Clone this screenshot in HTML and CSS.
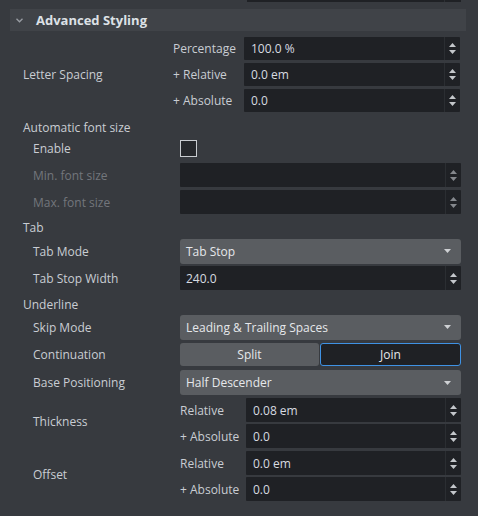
FILE: index.html
```html
<!DOCTYPE html>
<html>
<head>
<meta charset="utf-8">
<link rel="stylesheet" href="styles.css">
</head>
<body>
<div class="panel">
  <div class="topfield"><span class="topspin"></span></div>

  <div class="header">
    <svg class="chev" width="7" height="5" viewBox="0 0 7 5"><polyline points="0.5,0.8 3.5,3.8 6.5,0.8" fill="none" stroke="#9a9ea4" stroke-width="1.3"/></svg>
    <span class="htitle">Advanced Styling</span>
  </div>

  <div class="group ls">
    <div class="glabel">Letter Spacing</div>
    <div class="subrows">
      <div class="subrow"><span class="sublabel">Percentage</span><div class="spinbox"><span class="val">100.0 %</span><span class="spin"><svg width="7" height="11" viewBox="0 0 7 11"><polygon points="3.5,0 7,4 0,4"/><polygon points="0,7 7,7 3.5,11"/></svg></span></div></div>
      <div class="subrow"><span class="sublabel">+ Relative</span><div class="spinbox"><span class="val">0.0 em</span><span class="spin"><svg width="7" height="11" viewBox="0 0 7 11"><polygon points="3.5,0 7,4 0,4"/><polygon points="0,7 7,7 3.5,11"/></svg></span></div></div>
      <div class="subrow"><span class="sublabel">+ Absolute</span><div class="spinbox"><span class="val">0.0</span><span class="spin"><svg width="7" height="11" viewBox="0 0 7 11"><polygon points="3.5,0 7,4 0,4"/><polygon points="0,7 7,7 3.5,11"/></svg></span></div></div>
    </div>
  </div>

  <div class="heading h-auto">Automatic font size</div>
  <div class="row flush"><span class="label">Enable</span><span class="check"></span></div>
  <div class="row"><span class="label disabled">Min. font size</span><div class="spinbox wide dis"><span class="val"></span><span class="spin"><svg width="7" height="11" viewBox="0 0 7 11"><polygon points="3.5,0 7,4 0,4"/><polygon points="0,7 7,7 3.5,11"/></svg></span></div></div>
  <div class="row"><span class="label disabled">Max. font size</span><div class="spinbox wide dis"><span class="val"></span><span class="spin"><svg width="7" height="11" viewBox="0 0 7 11"><polygon points="3.5,0 7,4 0,4"/><polygon points="0,7 7,7 3.5,11"/></svg></span></div></div>

  <div class="heading">Tab</div>
  <div class="row flush"><span class="label">Tab Mode</span><div class="combo"><span>Tab Stop</span><svg class="darr" width="7" height="4" viewBox="0 0 7 4"><polygon points="0,0 7,0 3.5,4"/></svg></div></div>
  <div class="row"><span class="label">Tab Stop Width</span><div class="spinbox wide"><span class="val">240.0</span><span class="spin"><svg width="7" height="11" viewBox="0 0 7 11"><polygon points="3.5,0 7,4 0,4"/><polygon points="0,7 7,7 3.5,11"/></svg></span></div></div>

  <div class="heading h-under">Underline</div>
  <div class="row flush"><span class="label">Skip Mode</span><div class="combo"><span>Leading &amp; Trailing Spaces</span><svg class="darr" width="7" height="4" viewBox="0 0 7 4"><polygon points="0,0 7,0 3.5,4"/></svg></div></div>
  <div class="row loose short"><span class="label">Continuation</span><div class="toggle"><span class="tbtn">Split</span><span class="tbtn on">Join</span></div></div>
  <div class="row loose"><span class="label">Base Positioning</span><div class="combo"><span>Half Descender</span><svg class="darr" width="7" height="4" viewBox="0 0 7 4"><polygon points="0,0 7,0 3.5,4"/></svg></div></div>

  <div class="group ul">
    <div class="glabel">Thickness</div>
    <div class="subrows">
      <div class="subrow"><span class="sublabel">Relative</span><div class="spinbox"><span class="val">0.08 em</span><span class="spin"><svg width="7" height="11" viewBox="0 0 7 11"><polygon points="3.5,0 7,4 0,4"/><polygon points="0,7 7,7 3.5,11"/></svg></span></div></div>
      <div class="subrow"><span class="sublabel">+ Absolute</span><div class="spinbox"><span class="val">0.0</span><span class="spin"><svg width="7" height="11" viewBox="0 0 7 11"><polygon points="3.5,0 7,4 0,4"/><polygon points="0,7 7,7 3.5,11"/></svg></span></div></div>
    </div>
  </div>
  <div class="group ul">
    <div class="glabel">Offset</div>
    <div class="subrows">
      <div class="subrow"><span class="sublabel">Relative</span><div class="spinbox"><span class="val">0.0 em</span><span class="spin"><svg width="7" height="11" viewBox="0 0 7 11"><polygon points="3.5,0 7,4 0,4"/><polygon points="0,7 7,7 3.5,11"/></svg></span></div></div>
      <div class="subrow"><span class="sublabel">+ Absolute</span><div class="spinbox"><span class="val">0.0</span><span class="spin"><svg width="7" height="11" viewBox="0 0 7 11"><polygon points="3.5,0 7,4 0,4"/><polygon points="0,7 7,7 3.5,11"/></svg></span></div></div>
    </div>
  </div>
</div>
</body>
</html>
```
FILE: styles.css
```css
html, body {
  margin: 0;
  padding: 0;
  background: #373a3f;
}
body {
  font-family: "Open Sans", "Noto Sans", sans-serif;
  font-size: 12px;
  color: #c9cdd3;
  width: 478px;
  height: 516px;
  overflow: hidden;
}
.panel {
  display: flex;
  flex-direction: column;
}
.topfield {
  margin-left: 247px;
  width: 214px;
  height: 2px;
  background: #1f2125;
  display: flex;
  justify-content: flex-end;
}
.topspin {
  width: 16px;
  border-left: 1px solid #2c2f33;
}
.header {
  margin: 7px 0 0 10px;
  width: 456px;
  height: 22px;
  background: #404348;
  display: flex;
  align-items: center;
}
.chev {
  margin-left: 6px;
  margin-top: 1px;
}
.htitle {
  margin-left: 13px;
  font-weight: 700;
  font-size: 13px;
  color: #dde1e6;
}
.group {
  display: flex;
  align-items: center;
}
.glabel {
  flex: none;
}
.subrows {
  display: flex;
  flex-direction: column;
}
.subrow {
  display: flex;
  align-items: center;
}
.ls {
  margin-top: 6px;
}
.ls .glabel {
  width: 150px;
  margin-left: 23px;
}
.ls .sublabel {
  width: 71px;
}
.ls .subrow {
  height: 23px;
}
.ls .subrow + .subrow {
  margin-top: 3px;
}
.ls .spinbox {
  width: 216px;
  height: 23px;
}
.ul .glabel {
  width: 147px;
  margin-left: 33px;
}
.ul .sublabel {
  width: 66px;
}
.ul .subrow {
  height: 24px;
  margin-top: 3px;
}
.ul .subrow + .subrow {
  margin-top: 2px;
}
.ul .spinbox {
  width: 215px;
  height: 24px;
}
.spinbox {
  display: flex;
  align-items: stretch;
  background: #1f2125;
  border-radius: 1px;
  box-sizing: border-box;
  color: #d7dbe0;
}
.spinbox .val {
  flex: 1;
  display: flex;
  align-items: center;
  padding-left: 7px;
}
.spin {
  width: 15px;
  border-left: 1px solid #2b2e32;
  display: flex;
  align-items: center;
  justify-content: center;
}
.spin svg {
  fill: #c4c7cb;
}
.spinbox.dis .spin svg {
  fill: #85888d;
}
.spinbox.wide {
  width: 281px;
  height: 24px;
}
.spinbox.wide .val {
  padding-left: 6px;
}
.heading {
  margin-left: 23px;
  height: 25px;
  padding-top: 6px;
  line-height: 16px;
  box-sizing: border-box;
}
.heading.h-auto {
  height: 24px;
  padding-top: 8px;
}
.heading.h-under {
  padding-top: 7px;
}
.row {
  display: flex;
  align-items: center;
  height: 24px;
  margin-top: 3px;
}
.row.flush {
  margin-top: 0;
}
.row.loose {
  margin-top: 4px;
  height: 25px;
}
.row.loose.short {
  height: 23px;
}
.label {
  margin-left: 33px;
  width: 147px;
  flex: none;
}
.label.disabled {
  color: #73767c;
}
.check {
  width: 17px;
  height: 17px;
  box-sizing: border-box;
  border: 1px solid #c9ccd0;
  background: #26282c;
}
.combo {
  width: 281px;
  height: 25px;
  background: #5a5d61;
  border-radius: 3px;
  display: flex;
  align-items: center;
  justify-content: space-between;
  padding: 0 10px 0 6px;
  box-sizing: border-box;
  color: #e6e8eb;
}
.darr {
  fill: #cfd1d4;
}
.toggle {
  width: 281px;
  height: 23px;
  display: flex;
  gap: 1px;
}
.tbtn {
  flex: 1;
  display: flex;
  align-items: center;
  justify-content: center;
  background: #5a5d61;
  border-radius: 3px;
  color: #e6e8eb;
  box-sizing: border-box;
}
.tbtn.on {
  background: #1f2125;
  border: 1px solid #3f92e4;
}
```
